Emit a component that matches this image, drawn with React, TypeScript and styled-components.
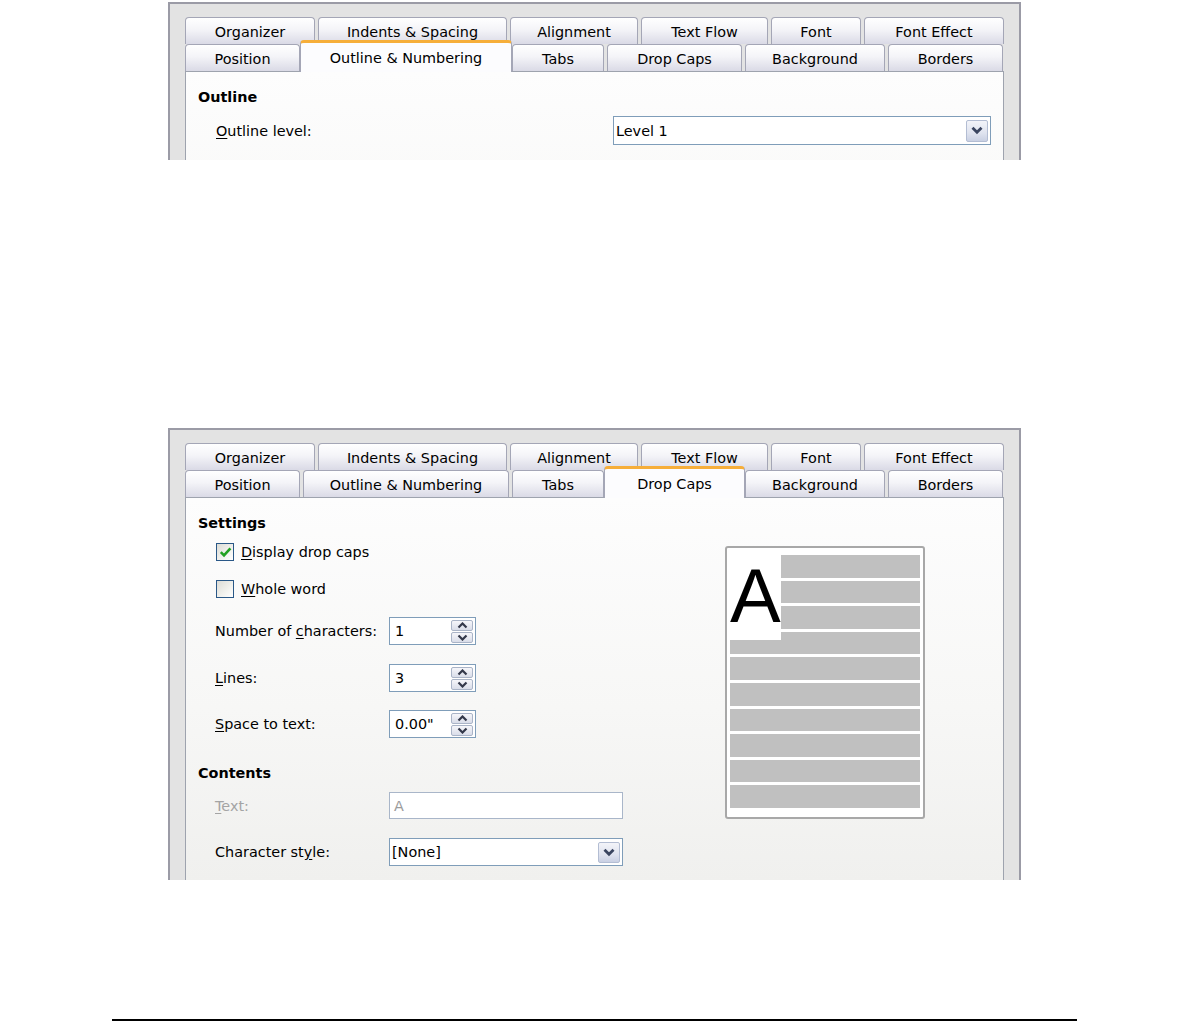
import type { FC, ReactNode } from 'react';
import styled, { createGlobalStyle, css } from 'styled-components';

const GlobalStyle = createGlobalStyle`
  html, body {
    margin: 0;
    padding: 0;
    background: #fff;
  }
  body {
    font-family: "DejaVu Sans", "Liberation Sans", sans-serif;
    font-size: 14.4px;
    color: #000;
  }
`;

const Page = styled.div`
  width: 1190px;
  height: 1021px;
  display: flex;
  flex-direction: column;
  overflow: hidden;
`;

const Clip = styled.div<{ $top: number; $height: number }>`
  flex-shrink: 0;
  margin: ${(p) => p.$top}px 0 0 168px;
  width: 853px;
  height: ${(p) => p.$height}px;
  overflow: hidden;
`;

const Frame = styled.div`
  box-sizing: border-box;
  border: 2px solid #9b9ba6;
  border-bottom: none;
  background: #e3e3e3;
  padding: 13px 15px 0 15px;
  display: flex;
  flex-direction: column;
`;

const TabRow = styled.div`
  display: flex;
  align-items: flex-end;
  gap: 3px;
  height: 27px;
`;

const Tab = styled.div<{ $w: number; $active?: boolean }>`
  box-sizing: border-box;
  flex-shrink: 0;
  width: ${(p) => p.$w}px;
  height: 27px;
  display: flex;
  align-items: center;
  justify-content: center;
  white-space: nowrap;
  border: 1px solid #a4a6b6;
  border-bottom: none;
  border-radius: 4px 4px 0 0;
  background: linear-gradient(180deg, #ffffff 0%, #f4f4f8 45%, #dadae6 100%);
  padding-top: 1px;

  ${(p) =>
    p.$active &&
    css`
      position: relative;
      z-index: 1;
      width: ${p.$w + 6}px;
      height: 32px;
      margin: 0 -3px -1px -3px;
      background: #fcfcfe;
      border-top: 3px solid #f6ae3a;
      border-color: #f6ae3a #a4a6b6 #a4a6b6;
      border-radius: 4px 4px 0 0;
      padding-top: 0;
    `}
`;

const Panel = styled.div`
  box-sizing: border-box;
  height: 383px;
  border: 1px solid #9ea3ae;
  border-bottom: none;
  background: linear-gradient(180deg, #fdfdfd 0%, #f7f7f6 55%, #f0f0ee 100%);
  padding: 15px 0 0 12px;
  display: flex;
`;

const Column = styled.div<{ $w?: number }>`
  display: flex;
  flex-direction: column;
  width: ${(p) => (p.$w ? `${p.$w}px` : 'auto')};
  flex: ${(p) => (p.$w ? '0 0 auto' : '1')};
`;

const Heading = styled.div<{ $gap?: number }>`
  height: 20px;
  line-height: 20px;
  font-weight: bold;
  margin-top: ${(p) => p.$gap ?? 0}px;
`;

const Row = styled.div<{ $gap: number; $h: number; $indent: number }>`
  display: flex;
  align-items: center;
  height: ${(p) => p.$h}px;
  margin-top: ${(p) => p.$gap}px;
  padding-left: ${(p) => p.$indent}px;
`;

const Label = styled.div<{ $w: number; $disabled?: boolean }>`
  width: ${(p) => p.$w}px;
  flex-shrink: 0;
  white-space: nowrap;
  color: ${(p) => (p.$disabled ? '#a4a4a4' : '#000')};
`;

const Key = styled.span`
  text-decoration: underline;
  text-underline-offset: 2px;
`;

const Box = styled.div<{ $w: number; $h: number; $disabled?: boolean }>`
  box-sizing: border-box;
  width: ${(p) => p.$w}px;
  height: ${(p) => p.$h}px;
  border: 1px solid ${(p) => (p.$disabled ? '#a9b6c9' : '#7f9db9')};
  background: #fff;
  display: flex;
  align-items: center;
  justify-content: space-between;
  color: ${(p) => (p.$disabled ? '#9c9c9c' : '#000')};
`;

const BoxText = styled.span<{ $pad: number }>`
  padding-left: ${(p) => p.$pad}px;
  white-space: nowrap;
`;

const DropButton = styled.div`
  box-sizing: border-box;
  width: 22px;
  height: calc(100% - 5px);
  margin-right: 2px;
  border: 1px solid #b3bdd3;
  border-radius: 2px;
  background: linear-gradient(180deg, #f3f4f9 0%, #dfe3ef 60%, #c9d0e3 100%);
  display: flex;
  align-items: center;
  justify-content: center;
`;

const SpinGroup = styled.div`
  display: flex;
  flex-direction: column;
  gap: 1px;
  margin-right: 2px;
`;

const SpinButton = styled.div`
  box-sizing: border-box;
  width: 22px;
  height: 11px;
  border: 1px solid #aab4c7;
  border-radius: 2px;
  background: linear-gradient(180deg, #f6f6fa 0%, #d9dde9 100%);
  display: flex;
  align-items: center;
  justify-content: center;
`;

const CheckRow = styled.label`
  display: flex;
  align-items: center;
  gap: 7px;
  white-space: nowrap;
`;

const CheckBox = styled.span`
  box-sizing: border-box;
  width: 18px;
  height: 18px;
  border: 1px solid #2a5887;
  background: linear-gradient(135deg, #dcdcd6 0%, #f2f2ee 60%, #ffffff 100%);
  display: flex;
  align-items: center;
  justify-content: center;
`;

const PreviewColumn = styled.div`
  padding-top: 33px;
`;

const Preview = styled.div`
  position: relative;
  box-sizing: border-box;
  width: 200px;
  height: 273px;
  border: 2px solid #a8a8a8;
  border-radius: 3px;
  background: #fff;
  padding: 7px 3px 0 3px;
  display: flex;
  flex-direction: column;
  gap: 3px;
`;

const Bar = styled.div<{ $indent?: boolean }>`
  height: 22.6px;
  margin-left: ${(p) => (p.$indent ? 51 : 0)}px;
  background: #c0c0c0;
`;

const DropCap = styled.div`
  position: absolute;
  left: 3px;
  top: 7px;
  width: 51px;
  height: 85px;
  box-sizing: border-box;
  padding-top: 3px;
  background: #fff;
  font-family: "Liberation Sans", Arial, sans-serif;
  font-size: 76px;
  line-height: 76px;
  white-space: nowrap;
`;

const Rule = styled.div`
  flex-shrink: 0;
  margin: 139px 0 0 112px;
  width: 965px;
  height: 2px;
  background: #000;
`;

const Chevron: FC = () => (
  <svg width="12" height="9" viewBox="0 0 12 9">
    <path d="M1.5 1.8 L6 6.3 L10.5 1.8" fill="none" stroke="#3a4560" strokeWidth="2.8" />
  </svg>
);

const SpinArrow: FC<{ up?: boolean }> = ({ up }) => (
  <svg width="11" height="7" viewBox="0 0 11 7">
    <path
      d={up ? 'M1.5 5.5 L5.5 1.5 L9.5 5.5' : 'M1.5 1.5 L5.5 5.5 L9.5 1.5'}
      fill="none"
      stroke="#33384a"
      strokeWidth="2.2"
    />
  </svg>
);

const Tick: FC = () => (
  <svg width="13" height="12" viewBox="0 0 13 12">
    <path d="M1.8 6.2 L5 9.4 L11.4 2.4" fill="none" stroke="#21a121" strokeWidth="2.6" />
  </svg>
);

const Dropdown: FC<{ w: number; h: number; value: string; pad: number }> = ({ w, h, value, pad }) => (
  <Box $w={w} $h={h}>
    <BoxText $pad={pad}>{value}</BoxText>
    <DropButton>
      <Chevron />
    </DropButton>
  </Box>
);

const Spin: FC<{ value: string }> = ({ value }) => (
  <Box $w={87} $h={28}>
    <BoxText $pad={5}>{value}</BoxText>
    <SpinGroup>
      <SpinButton>
        <SpinArrow up />
      </SpinButton>
      <SpinButton>
        <SpinArrow />
      </SpinButton>
    </SpinGroup>
  </Box>
);

const Check: FC<{ checked?: boolean; children: ReactNode }> = ({ checked, children }) => (
  <CheckRow>
    <CheckBox>{checked && <Tick />}</CheckBox>
    <span>{children}</span>
  </CheckRow>
);

type TabSpec = { label: string; w: number };

const rowOne: TabSpec[] = [
  { label: 'Organizer', w: 130 },
  { label: 'Indents & Spacing', w: 189 },
  { label: 'Alignment', w: 128 },
  { label: 'Text Flow', w: 127 },
  { label: 'Font', w: 90 },
  { label: 'Font Effect', w: 140 },
];

const rowTwo: TabSpec[] = [
  { label: 'Position', w: 115 },
  { label: 'Outline & Numbering', w: 206 },
  { label: 'Tabs', w: 92 },
  { label: 'Drop Caps', w: 135 },
  { label: 'Background', w: 140 },
  { label: 'Borders', w: 115 },
];

const Tabs: FC<{ active: string }> = ({ active }) => (
  <>
    <TabRow>
      {rowOne.map((t) => (
        <Tab key={t.label} $w={t.w}>
          {t.label}
        </Tab>
      ))}
    </TabRow>
    <TabRow>
      {rowTwo.map((t) => (
        <Tab key={t.label} $w={t.w} $active={t.label === active}>
          {t.label}
        </Tab>
      ))}
    </TabRow>
  </>
);

const App: FC = () => (
  <Page>
    <GlobalStyle />

    <Clip $top={2} $height={158}>
      <Frame>
        <Tabs active="Outline & Numbering" />
        <Panel>
          <Column>
            <Heading>Outline</Heading>
            <Row $gap={9} $h={29} $indent={18}>
              <Label $w={397}>
                <Key>O</Key>utline level:
              </Label>
              <Dropdown w={378} h={29} value="Level 1" pad={2} />
            </Row>
          </Column>
        </Panel>
      </Frame>
    </Clip>

    <Clip $top={268} $height={452}>
      <Frame>
        <Tabs active="Drop Caps" />
        <Panel>
          <Column $w={527}>
            <Heading>Settings</Heading>
            <Row $gap={8} $h={22} $indent={18}>
              <Check checked>
                <Key>D</Key>isplay drop caps
              </Check>
            </Row>
            <Row $gap={15} $h={22} $indent={18}>
              <Check>
                <Key>W</Key>hole word
              </Check>
            </Row>
            <Row $gap={17} $h={28} $indent={17}>
              <Label $w={174}>
                Number of <Key>c</Key>haracters:
              </Label>
              <Spin value="1" />
            </Row>
            <Row $gap={19} $h={28} $indent={17}>
              <Label $w={174}>
                <Key>L</Key>ines:
              </Label>
              <Spin value="3" />
            </Row>
            <Row $gap={18} $h={28} $indent={17}>
              <Label $w={174}>
                <Key>S</Key>pace to text:
              </Label>
              <Spin value={'0.00"'} />
            </Row>

            <Heading $gap={25}>Contents</Heading>
            <Row $gap={9} $h={27} $indent={17}>
              <Label $w={174} $disabled>
                <Key>T</Key>ext:
              </Label>
              <Box $w={234} $h={27} $disabled>
                <BoxText $pad={4}>A</BoxText>
              </Box>
            </Row>
            <Row $gap={19} $h={28} $indent={17}>
              <Label $w={174}>
                Character st<Key>y</Key>le:
              </Label>
              <Dropdown w={234} h={28} value="[None]" pad={2} />
            </Row>
          </Column>

          <PreviewColumn>
            <Preview>
              {Array.from({ length: 10 }, (_, i) => (
                <Bar key={i} $indent={i < 3} />
              ))}
              <DropCap>A</DropCap>
            </Preview>
          </PreviewColumn>
        </Panel>
      </Frame>
    </Clip>

    <Rule />
  </Page>
);

export default App;
